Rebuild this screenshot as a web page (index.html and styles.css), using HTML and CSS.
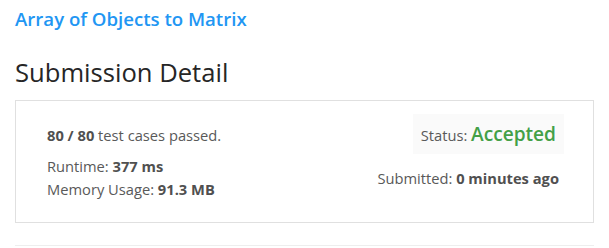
FILE: index.html
```html
<!DOCTYPE html>
<html>
<head>
<meta charset="utf-8">
<link rel="stylesheet" href="styles.css">
</head>
<body>
<div class="page">
  <a class="problem-title" href="#">Array of Objects to Matrix</a>
  <h2 class="heading">Submission Detail</h2>
  <div class="panel">
    <div class="left">
      <div class="passed"><strong>80 / 80</strong> test cases passed.</div>
      <div class="stats">
        <div>Runtime: <strong>377 ms</strong></div>
        <div>Memory Usage: <strong>91.3 MB</strong></div>
      </div>
    </div>
    <div class="right">
      <div class="status">Status: <span class="accepted">Accepted</span></div>
      <div class="submitted">Submitted: <strong>0 minutes ago</strong></div>
    </div>
  </div>
  <div class="divider"></div>
</div>
</body>
</html>
```

FILE: styles.css
```css
html, body {
  margin: 0;
  padding: 0;
  background: #fff;
}
body {
  font-family: "Open Sans", "Noto Sans", sans-serif;
  color: #595959;
}
.page {
  padding: 5px 15px 0;
}
.problem-title {
  display: block;
  color: #2196f3;
  text-decoration: none;
  font-size: 18.6px;
  font-weight: 600;
  line-height: 28px;
}
.heading {
  margin: 24px 0 0;
  font-size: 25.6px;
  font-weight: 500;
  line-height: 32px;
  color: #262626;
}
.panel {
  margin-top: 11px;
  border: 1px solid #e0e0e0;
  padding: 13px 29px 21px 31px;
  display: flex;
  justify-content: space-between;
  font-size: 14.7px;
}
.left {
  padding-top: 9px;
}
.passed {
  line-height: 24px;
}
.stats {
  margin-top: 8px;
  line-height: 23px;
}
strong {
  font-weight: 700;
  color: #505050;
}
.right {
  display: flex;
  flex-direction: column;
  align-items: flex-end;
}
.status {
  background: #fafafa;
  padding: 9px 8px 7px;
  line-height: 24px;
}
.accepted {
  color: #43a047;
  font-size: 19.1px;
  font-weight: 600;
  line-height: 1;
}
.submitted {
  margin-top: 12px;
  margin-right: 5px;
  line-height: 24px;
}
.divider {
  margin-top: 22px;
  border-top: 1px solid #eee;
}
```
